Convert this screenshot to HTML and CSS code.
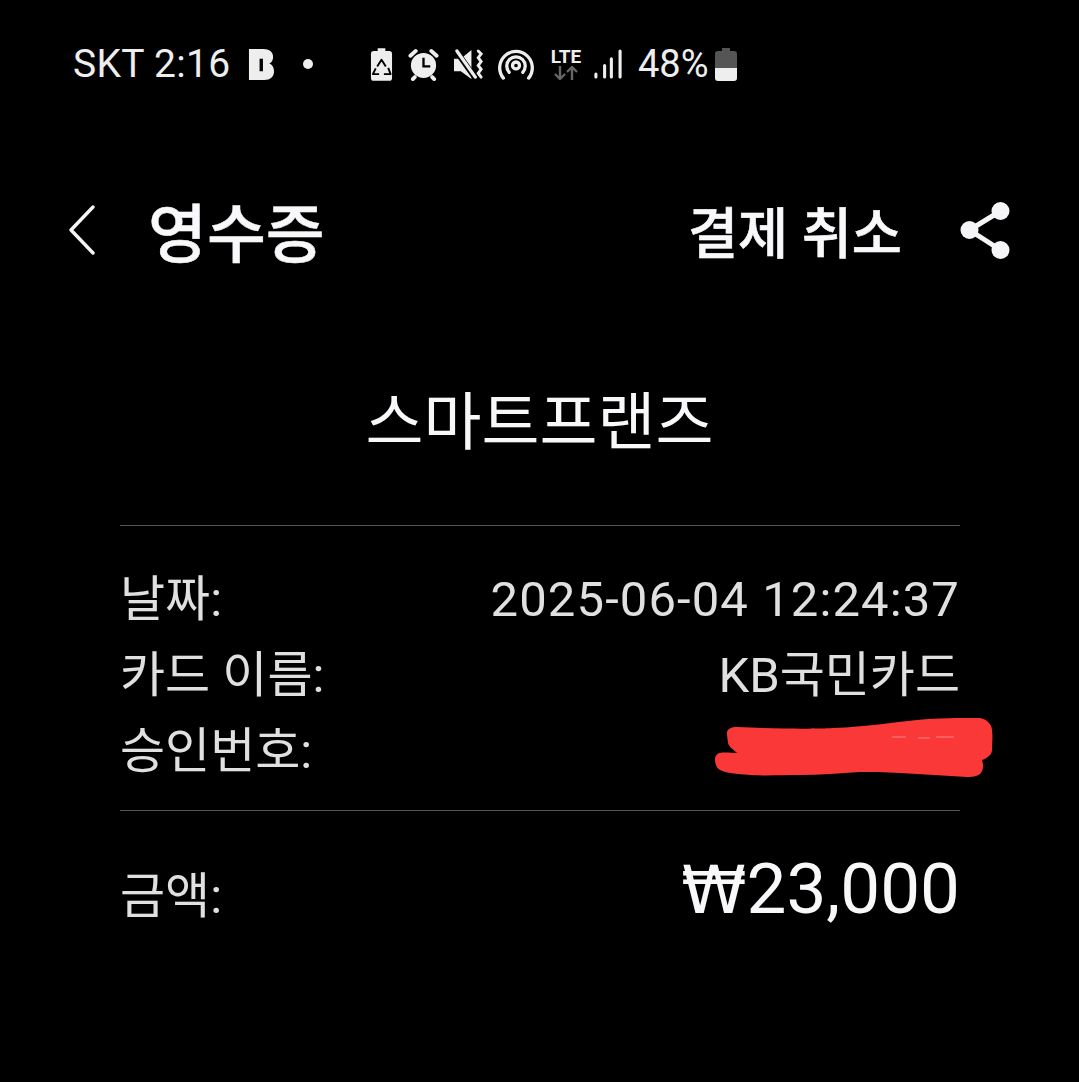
FILE: index.html
```html
<!DOCTYPE html>
<html lang="ko">
<head>
<meta charset="utf-8">
<title>영수증</title>
<link rel="stylesheet" href="styles.css">
</head>
<body>
<div class="status">
  <span class="carrier">SKT 2:16</span>
  <svg class="ic ic-b" viewBox="0 0 28 34"><path fill="#eee" d="M1 1h15c6 0 10 3 10 8 0 3-1 6-4 7 3 1 5 4 5 8 0 6-4 9-10 9H1z"/><rect x="12" y="11" width="3.5" height="13" fill="#000"/></svg>
  <span class="dot"></span>
  <svg class="ic ic-recycle" viewBox="0 0 24 34"><path fill="#eee" d="M8 0h8v3h4c2 0 3 1 3 3v25c0 2-1 3-3 3H4c-2 0-3-1-3-3V6c0-2 1-3 3-3h4z"/><path fill="none" stroke="#000" stroke-width="2" stroke-linejoin="round" d="M7.500 19L12 12l4.500 7M19 20.500l2.500 6.500H14.500M9.500 27H3l3-6"/></svg>
  <svg class="ic ic-alarm" viewBox="0 0 32 34"><circle cx="16" cy="18" r="13" fill="#eee"/><path fill="none" stroke="#000" stroke-width="2.400" d="M16 10v9h7"/><path stroke="#eee" stroke-width="4" stroke-linecap="round" d="M2.500 8L8 3M29.500 8L24 3M7 30l-2 2M25 30l2 2"/></svg>
  <svg class="ic ic-mute" viewBox="0 0 32 34"><path fill="#eee" d="M0 11h7l11-9v30L7 24H0z"/><path stroke="#000" stroke-width="6" d="M0 0l22 31"/><path stroke="#eee" stroke-width="3.400" stroke-linecap="round" d="M3 3l19 27"/><path fill="none" stroke="#eee" stroke-width="3" stroke-linecap="round" d="M25 3l3 3-3 4 3 4-3 4 3 4-3 4 3 4"/></svg>
  <svg class="ic ic-hotspot" viewBox="0 0 38 34"><path fill="none" stroke="#eee" stroke-width="3.400" stroke-linecap="round" d="M6 31a16.800 16.800 0 1 1 26 0"/><path fill="none" stroke="#eee" stroke-width="3.400" stroke-linecap="round" d="M12 25a9.500 9.500 0 1 1 14 0"/><circle cx="19" cy="18" r="3.600" fill="none" stroke="#eee" stroke-width="3.400"/></svg>
  <div class="lte">
    <span class="lte-text">LTE</span>
    <svg class="ic-arrows" viewBox="0 0 24 14"><path fill="none" stroke="#666" stroke-width="2.400" d="M6 0v13M1 8l5 5 5-5M18 14V1M13 6l5-5 5 5"/></svg>
  </div>
  <svg class="ic ic-signal" viewBox="0 0 30 32"><path stroke="#eee" stroke-width="3.200" stroke-linecap="round" d="M3 29v-3M12 29V17M19 29V10M28 29V2"/></svg>
  <span class="pct">48%</span>
  <svg class="ic ic-battery" viewBox="0 0 22 33"><path fill="#555" d="M7 0h8v3h4c2 0 3 1 3 3v14H0V6c0-2 1-3 3-3h4z"/><path fill="#eee" d="M0 20h22v10c0 2-1 3-3 3H3c-2 0-3-1-3-3z"/></svg>
</div>

<header class="appbar">
  <svg class="back" viewBox="0 0 28 50"><path fill="none" stroke="#f5f5f7" stroke-width="3.400" stroke-linecap="round" stroke-linejoin="round" d="M25 2L3 25l22 23"/></svg>
  <h1 class="title">영수증</h1>
  <button class="cancel">결제 취소</button>
  <svg class="share" viewBox="0 0 52 58"><path fill="none" stroke="#f5f5f7" stroke-width="5" d="M41 10L10 29l31 20"/><circle cx="41" cy="10" r="9" fill="#f5f5f7"/><circle cx="10" cy="29" r="9" fill="#f5f5f7"/><circle cx="41" cy="49" r="9" fill="#f5f5f7"/></svg>
</header>

<h2 class="merchant">스마트프랜즈</h2>

<main class="receipt">
  <div class="details">
    <div class="row"><span>날짜:</span><span class="num">2025-06-04 12:24:37</span></div>
    <div class="row"><span>카드 이름:</span><span>KB국민카드</span></div>
    <div class="row row-redacted"><span>승인번호:</span>
      <svg class="scribble" viewBox="0 0 282 64"><path fill="#fb3838" d="M15 19C14 13 19 11 25 11c40 2 80 2 96 1 34-1 60-6 84-8 22-2 40-2 63-2 8 1 12 8 12 12 1 8 0 14 0 20 0 4-4 8-10 10 2 6 1 11-2 14-4 3-10 3-13 3-22-1-44-3-67-4-16-1-30-1-40-1-20 1-40 3-60 3-16 0-34 1-50 0-14-1-24-2-30-5-4-2-5-8-5-10 0-5 3-7 5-7 5-1 12 0 17 0-3-3-8-6-9-10z"/><path stroke="#f9a0a0" stroke-width="1.500" opacity="0.500" d="M180 21h14M206 22h12M224 21h18"/></svg>
    </div>
  </div>
  <div class="total">
    <span>금액:</span>
    <span class="amount"><span class="won">₩</span>23,000</span>
  </div>
</main>
</body>
</html>
```
FILE: styles.css
```css
* { box-sizing: border-box; }
html, body { margin: 0; padding: 0; }
body {
  width: 1079px;
  height: 1082px;
  overflow: hidden;
  background: #000;
  color: #e0e0e0;
  font-family: Roboto, "Noto Sans CJK KR", sans-serif;
}
.status {
  display: flex;
  align-items: center;
  height: 34px;
  margin-top: 47px;
  padding-left: 73px;
  color: #eee;
  font-size: 38px;
  line-height: 34px;
}
.carrier { width: 175px; flex: none; font-size: 39px; letter-spacing: 0.3px; white-space: nowrap; }
.ic { display: block; flex: none; }
.ic-b { width: 27px; height: 33px; }
.dot { width: 10px; height: 10px; border-radius: 50%; background: #eee; margin-left: 28px; margin-right: 57px; flex: none; }
.ic-recycle { width: 23px; height: 33px; margin-right: 15px; }
.ic-alarm { width: 31px; height: 33px; margin-right: 15px; }
.ic-mute { width: 31px; height: 33px; margin-right: 12px; }
.ic-hotspot { width: 38px; height: 33px; margin-right: 14px; }
.lte { width: 34px; display: flex; flex-direction: column; align-items: center; margin-right: 10px; flex: none; }
.lte-text { font-size: 19px; line-height: 18px; font-weight: 700; color: #eee; }
.ic-arrows { width: 24px; height: 14px; display: block; }
.ic-signal { width: 29px; height: 31px; margin-right: 16px; }
.pct { width: 77px; flex: none; }
.ic-battery { width: 22px; height: 33px; }

.appbar {
  display: flex;
  align-items: center;
  height: 110px;
  margin-top: 94px;
  padding-left: 68px;
}
.back { width: 28px; height: 50px; flex: none; }
.title {
  margin: 12px 0 0 52px;
  font-size: 64px;
  line-height: 70px;
  font-weight: 500;
  -webkit-text-stroke: 0.5px #f8f8fa;
  color: #f8f8fa;
  flex: none;
}
.cancel {
  margin: 8px 0 0 auto;
  padding: 0;
  border: 0;
  background: none;
  font: 500 54.5px/60px Roboto, "Noto Sans CJK KR", sans-serif;
  -webkit-text-stroke: 0.6px #f8f8fa;
  color: #f8f8fa;
}
.share { width: 53px; height: 58px; margin: 0 67px 0 57px; flex: none; }

.merchant {
  margin: 0;
  padding-top: 103px;
  height: 240px;
  font-size: 63px;
  line-height: 70px;
  font-weight: 400;
  color: #f8f8fa;
  text-align: center;
}
.receipt { margin: 0 119px 0 120px; }
.details {
  border-top: 1px solid #555;
  border-bottom: 1px solid #555;
  padding: 36px 0 20px;
}
.row {
  display: flex;
  justify-content: space-between;
  align-items: center;
  height: 76px;
  font-size: 49px;
  line-height: 76px;
}
.num { letter-spacing: 1.1px; }
.row-redacted { position: relative; }
.scribble {
  position: absolute;
  left: 592px;
  top: 2px;
  width: 282px;
  height: 64px;
}
.total {
  display: flex;
  justify-content: space-between;
  align-items: center;
  height: 160px;
  font-size: 49px;
}
.amount { font-size: 71px; color: #f8f8fa; margin-bottom: 6px; }
.won { font-family: "DejaVu Sans", sans-serif; font-size: 66px; }
```
